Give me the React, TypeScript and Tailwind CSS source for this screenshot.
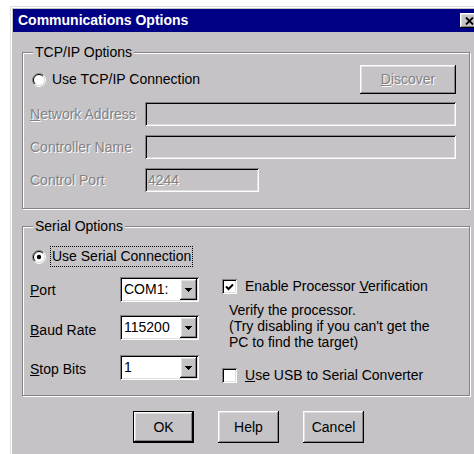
import React from "react";

// Classic 3D edge recipes (Windows 9x look)
const raised =
  "shadow-[inset_-1px_-1px_0_#000000,inset_1px_1px_0_#ffffff,inset_-2px_-2px_0_#848284,inset_2px_2px_0_#dedfde]";
const sunken =
  "shadow-[inset_1px_1px_0_#848284,inset_-1px_-1px_0_#ffffff,inset_2px_2px_0_#000000,inset_-2px_-2px_0_#dedfde]";
const dim = "text-[#848284] [text-shadow:1px_1px_0_#ffffff]";

function GroupBox({
  title,
  className,
  children,
}: {
  title: string;
  className?: string;
  children: React.ReactNode;
}) {
  return (
    <div
      className={`relative w-[448px] border border-[#848284] shadow-[inset_1px_1px_0_#ffffff,1px_1px_0_#ffffff] ${className ?? ""}`}
    >
      <span className="absolute left-[10px] top-[-9px] bg-[#c6c3c6] px-[2px] leading-[16px]">
        {title}
      </span>
      {children}
    </div>
  );
}

function Radio({ checked }: { checked?: boolean }) {
  return (
    <svg width="14" height="14" viewBox="0 0 14 14" className="shrink-0">
      <circle cx="7" cy="7" r="5.5" fill="#ffffff" />
      <path d="M2.4 11.6 A6.5 6.5 0 0 1 11.6 2.4" stroke="#848284" fill="none" />
      <path d="M11.6 2.4 A6.5 6.5 0 0 1 2.4 11.6" stroke="#ffffff" fill="none" />
      <path d="M3.11 10.89 A5.5 5.5 0 0 1 10.89 3.11" stroke="#000000" fill="none" />
      <path d="M10.89 3.11 A5.5 5.5 0 0 1 3.11 10.89" stroke="#dedfde" fill="none" />
      {checked && <circle cx="7" cy="7" r="2.2" fill="#000000" />}
    </svg>
  );
}

function CheckBox({ checked }: { checked?: boolean }) {
  return (
    <div className={`flex h-[15px] w-[15px] shrink-0 items-center justify-center bg-white ${sunken}`}>
      {checked && (
        <svg width="9" height="8" viewBox="0 0 9 8">
          <path d="M1 3.5 L3.5 6 L8 1.5" stroke="#000000" strokeWidth="2" fill="none" />
        </svg>
      )}
    </div>
  );
}

function DownArrow() {
  return (
    <svg width="7" height="4" viewBox="0 0 7 4" shapeRendering="crispEdges">
      <rect x="0" y="0" width="7" height="1" fill="#000" />
      <rect x="1" y="1" width="5" height="1" fill="#000" />
      <rect x="2" y="2" width="3" height="1" fill="#000" />
      <rect x="3" y="3" width="1" height="1" fill="#000" />
    </svg>
  );
}

function Combo({ value }: { value: string }) {
  return (
    <div className={`flex h-[25px] w-[79px] bg-white p-[2px] ${sunken}`}>
      <span className="flex-1 pl-[2px] leading-[21px]">{value}</span>
      <div className={`flex w-[17px] items-center justify-center bg-[#c6c3c6] ${raised}`}>
        <DownArrow />
      </div>
    </div>
  );
}

function PushButton({
  children,
  isDefault,
}: {
  children: React.ReactNode;
  isDefault?: boolean;
}) {
  if (isDefault) {
    return (
      <div className="h-[32px] w-[61px] border border-black">
        <div className={`flex h-full w-full items-center justify-center ${raised}`}>{children}</div>
      </div>
    );
  }
  return (
    <div className={`flex h-[32px] w-[61px] items-center justify-center ${raised}`}>{children}</div>
  );
}

export default function App() {
  return (
    <div className="h-[454px] w-[474px] overflow-hidden bg-white font-['Liberation_Sans',Arial,sans-serif] text-[14px] leading-[17px] text-black">
      <div className="ml-[10px] mt-[6px] h-[470px] w-[471px] border-l border-t border-[#dedfde] bg-[#c6c3c6] p-[2px] shadow-[inset_1px_1px_0_#ffffff]">
        {/* title bar */}
        <div className="flex h-[23px] items-center justify-between bg-[#000084] pl-[5px] pr-[1px]">
          <span className="font-bold leading-[23px] text-white">Communications Options</span>
          <div className={`flex h-[15px] w-[18px] items-center justify-center bg-[#c6c3c6] ${raised}`}>
            <svg width="9" height="8" viewBox="0 0 9 8">
              <path d="M1 0.5 L8 7.5 M8 0.5 L1 7.5" stroke="#000" strokeWidth="1.8" />
            </svg>
          </div>
        </div>

        {/* dialog body */}
        <div className="pl-[9px] pt-[20px]">
          <GroupBox title="TCP/IP Options" className="pb-[16px] pl-[7px] pr-[13px] pt-[12px]">
            <div className="flex h-[29px] items-center justify-between">
              <div className="ml-[2px] flex items-center">
                <Radio />
                <span className="ml-[6px]">Use TCP/IP Connection</span>
              </div>
              <div className={`flex h-[29px] w-[96px] items-center justify-center ${raised}`}>
                <span className={dim}>
                  <u>D</u>iscover
                </span>
              </div>
            </div>
            <div className="mt-[8px] flex items-center">
              <span className={`w-[115px] ${dim}`}>
                <u>N</u>etwork Address
              </span>
              <div className={`h-[24px] flex-1 ${sunken}`} />
            </div>
            <div className="mt-[9px] flex items-center">
              <span className={`w-[115px] ${dim}`}>Controller Name</span>
              <div className={`h-[24px] flex-1 ${sunken}`} />
            </div>
            <div className="mt-[9px] flex items-center">
              <span className={`w-[115px] ${dim}`}>Control Port</span>
              <div className={`flex h-[24px] w-[114px] items-center px-[3px] ${sunken}`}>
                <span className={dim}>4244</span>
              </div>
            </div>
          </GroupBox>

          <GroupBox title="Serial Options" className="mt-[17px] pb-[11px] pl-[7px] pr-[13px] pt-[19px]">
            <div className="flex h-[21px] items-center">
              <div className="ml-[2px]">
                <Radio checked />
              </div>
              <div className="ml-[4px] flex h-[21px] items-center border border-dotted border-black px-[1px]">
                Use Serial Connection
              </div>
            </div>

            <div className="mt-[10px] flex items-start">
              <div className="w-[169px]">
                <div className="flex">
                  <span className="mt-[5px] w-[90px]">
                    <u>P</u>ort
                  </span>
                  <Combo value="COM1:" />
                </div>
                <div className="mt-[13px] flex">
                  <span className="mt-[7px] w-[90px]">
                    <u>B</u>aud Rate
                  </span>
                  <Combo value="115200" />
                </div>
                <div className="mt-[15px] flex">
                  <span className="mt-[6px] w-[90px]">
                    <u>S</u>top Bits
                  </span>
                  <Combo value="1" />
                </div>
              </div>

              <div className="ml-[23px]">
                <div className="mt-[1px] flex h-[17px] items-center">
                  <CheckBox checked />
                  <span className="ml-[8px]">
                    Enable Processor <u>V</u>erification
                  </span>
                </div>
                <div className="mt-[7px] pl-[7px] leading-[16px]">
                  <div>Verify the processor.</div>
                  <div>(Try disabling if you can't get the</div>
                  <div>PC to find the target)</div>
                </div>
                <div className="mt-[17px] flex h-[17px] items-center">
                  <CheckBox />
                  <span className="ml-[8px]">
                    <u>U</u>se USB to Serial Converter
                  </span>
                </div>
              </div>
            </div>
          </GroupBox>

          <div className="ml-[111px] mt-[15px] flex gap-[24px]">
            <PushButton isDefault>OK</PushButton>
            <PushButton>Help</PushButton>
            <PushButton>Cancel</PushButton>
          </div>
        </div>
      </div>
    </div>
  );
}
